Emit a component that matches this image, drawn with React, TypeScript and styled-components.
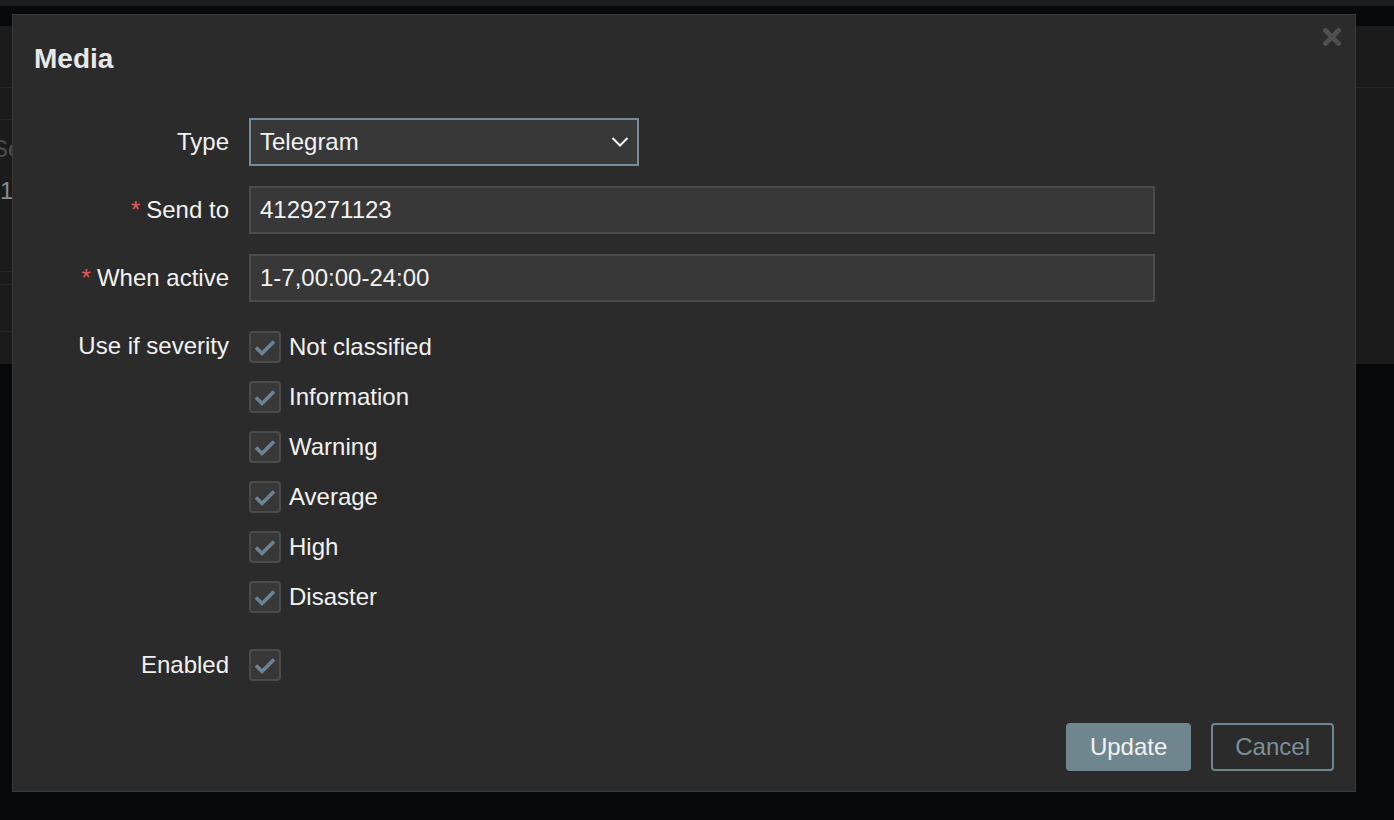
import React from "react";
import styled, { createGlobalStyle } from "styled-components";

const Global = createGlobalStyle`
  html, body { margin: 0; padding: 0; }
  body {
    background: #08090b;
    font-family: "Liberation Sans", Arial, Helvetica, sans-serif;
    width: 1394px;
    height: 820px;
    overflow: hidden;
  }
  * { box-sizing: border-box; }
`;

const Page = styled.div`
  position: relative;
  width: 1394px;
  height: 820px;
  display: flex;
  flex-direction: column;
`;

const TopStrip = styled.div`
  height: 6px;
  background: #1e1e1f;
`;

const Spacer = styled.div`
  height: 20px;
  background: #08090b;
`;

const BgPanel = styled.div`
  height: 338px;
  background: #1b1b1b;
  display: flex;
  flex-direction: column;
`;

const BgHeader = styled.div`
  height: 62px;
  border-bottom: 1px solid #262626;
`;

const BgTable = styled.div`
  width: 1300px;
  display: flex;
  flex-direction: column;
`;

const BgRow = styled.div<{ $h: number; $pad?: number }>`
  height: ${(p) => p.$h}px;
  padding-top: ${(p) => p.$pad ?? 0}px;
  border-bottom: 1px solid #262626;
  display: flex;
  flex-direction: column;
  gap: 18px;
  font-size: 24px;
  line-height: 24px;
  overflow: hidden;
`;

const BgText = styled.span<{ $color: string; $shift: number }>`
  color: ${(p) => p.$color};
  margin-left: ${(p) => p.$shift}px;
  white-space: nowrap;
`;

const Modal = styled.div`
  position: absolute;
  left: 12px;
  top: 14px;
  width: 1344px;
  height: 778px;
  background: #2b2b2b;
  border: 1px solid #383838;
  display: flex;
  flex-direction: column;
`;

const Header = styled.div`
  padding: 28px 20px 0 21px;
`;

const Title = styled.h4`
  margin: 0;
  font-size: 28px;
  line-height: 32px;
  font-weight: bold;
  color: #e8e8e8;
`;

const CloseButton = styled.button`
  position: absolute;
  top: 13px;
  right: 14px;
  width: 18px;
  height: 18px;
  padding: 0;
  border: 0;
  background: transparent;
  cursor: pointer;
  display: flex;
`;

const Form = styled.div`
  margin-top: 43px;
  display: grid;
  grid-template-columns: 216px 1fr;
  column-gap: 20px;
  row-gap: 20px;
`;

const Label = styled.label<{ $required?: boolean; $top?: number }>`
  text-align: right;
  font-size: 24px;
  line-height: 32px;
  color: #f2f2f2;
  align-self: ${(p) => (p.$top !== undefined ? "start" : "center")};
  margin-top: ${(p) => p.$top ?? 0}px;
  white-space: nowrap;
  ${(p) =>
    p.$required
      ? `&::before { content: "*"; color: #e45959; padding-right: 6px; }`
      : ""}
`;

const Field = styled.div<{ $top?: number }>`
  margin-top: ${(p) => p.$top ?? 0}px;
  display: flex;
`;

const SelectBox = styled.div`
  width: 390px;
  height: 48px;
  border: 2px solid #768d99;
  background: #383838;
  color: #f2f2f2;
  font-size: 24px;
  display: flex;
  align-items: center;
  justify-content: space-between;
  padding: 0 8px 0 9px;
`;

const TextInput = styled.input`
  width: 906px;
  height: 48px;
  border: 2px solid #4b4b4b;
  background: #383838;
  color: #f2f2f2;
  font-family: "Liberation Sans", Arial, Helvetica, sans-serif;
  font-size: 24px;
  padding: 0 9px;
  outline: none;
`;

const CheckList = styled.div`
  display: flex;
  flex-direction: column;
  gap: 18px;
`;

const CheckItem = styled.div`
  display: flex;
  align-items: center;
  gap: 8px;
  font-size: 24px;
  line-height: 32px;
  color: #f2f2f2;
`;

const Box = styled.span`
  width: 32px;
  height: 32px;
  border: 2px solid #4b4b4b;
  border-radius: 4px;
  background: #383838;
  display: flex;
  align-items: center;
  justify-content: center;
  flex: none;
`;

const Footer = styled.div`
  margin-top: auto;
  padding: 0 21px 20px 0;
  display: flex;
  justify-content: flex-end;
  gap: 20px;
`;

const Button = styled.button<{ $primary?: boolean }>`
  height: 48px;
  padding: 0 22px;
  border: 2px solid #70868f;
  border-radius: 4px;
  background: ${(p) => (p.$primary ? "#70868f" : "transparent")};
  color: ${(p) => (p.$primary ? "#f2f2f2" : "#7b8e99")};
  font-family: "Liberation Sans", Arial, Helvetica, sans-serif;
  font-size: 24px;
  cursor: pointer;
`;

const Check = () => (
  <Box>
    <svg width="28" height="28" viewBox="0 0 28 28">
      <polyline
        points="5,14.5 11,20.5 23,8.5"
        fill="none"
        stroke="#6b8494"
        strokeWidth="3.6"
      />
    </svg>
  </Box>
);

const severities = [
  "Not classified",
  "Information",
  "Warning",
  "Average",
  "High",
  "Disaster",
];

export default function App() {
  return (
    <Page>
      <Global />
      <TopStrip />
      <Spacer />
      <BgPanel>
        <BgHeader />
        <BgTable>
          <BgRow $h={32} />
          <BgRow $h={152} $pad={17}>
            <BgText $color="#4d4d4d" $shift={-8}>Send to</BgText>
            <BgText $color="#8a8a8a" $shift={0}>1</BgText>
          </BgRow>
          <BgRow $h={13} />
          <BgRow $h={47} />
        </BgTable>
      </BgPanel>

      <Modal>
        <Header>
          <Title>Media</Title>
        </Header>
        <CloseButton aria-label="Close">
          <svg width="18" height="18" viewBox="0 0 18 18">
            <path
              d="M2.5 2.5 L15.5 15.5 M15.5 2.5 L2.5 15.5"
              stroke="#4f4f4f"
              strokeWidth="4.8"
              strokeLinecap="square"
            />
          </svg>
        </CloseButton>

        <Form>
          <Label>Type</Label>
          <Field>
            <SelectBox>
              <span>Telegram</span>
              <svg width="18" height="12" viewBox="0 0 18 12">
                <polyline
                  points="1.5,2 9,9.5 16.5,2"
                  fill="none"
                  stroke="#f2f2f2"
                  strokeWidth="2"
                />
              </svg>
            </SelectBox>
          </Field>

          <Label $required>Send to</Label>
          <Field>
            <TextInput defaultValue="4129271123" />
          </Field>

          <Label $required>When active</Label>
          <Field>
            <TextInput defaultValue="1-7,00:00-24:00" />
          </Field>

          <Label $top={8}>Use if severity</Label>
          <Field $top={9}>
            <CheckList>
              {severities.map((s) => (
                <CheckItem key={s}>
                  <Check />
                  <span>{s}</span>
                </CheckItem>
              ))}
            </CheckList>
          </Field>

          <Label $top={16}>Enabled</Label>
          <Field $top={16}>
            <Check />
          </Field>
        </Form>

        <Footer>
          <Button $primary>Update</Button>
          <Button>Cancel</Button>
        </Footer>
      </Modal>
    </Page>
  );
}
